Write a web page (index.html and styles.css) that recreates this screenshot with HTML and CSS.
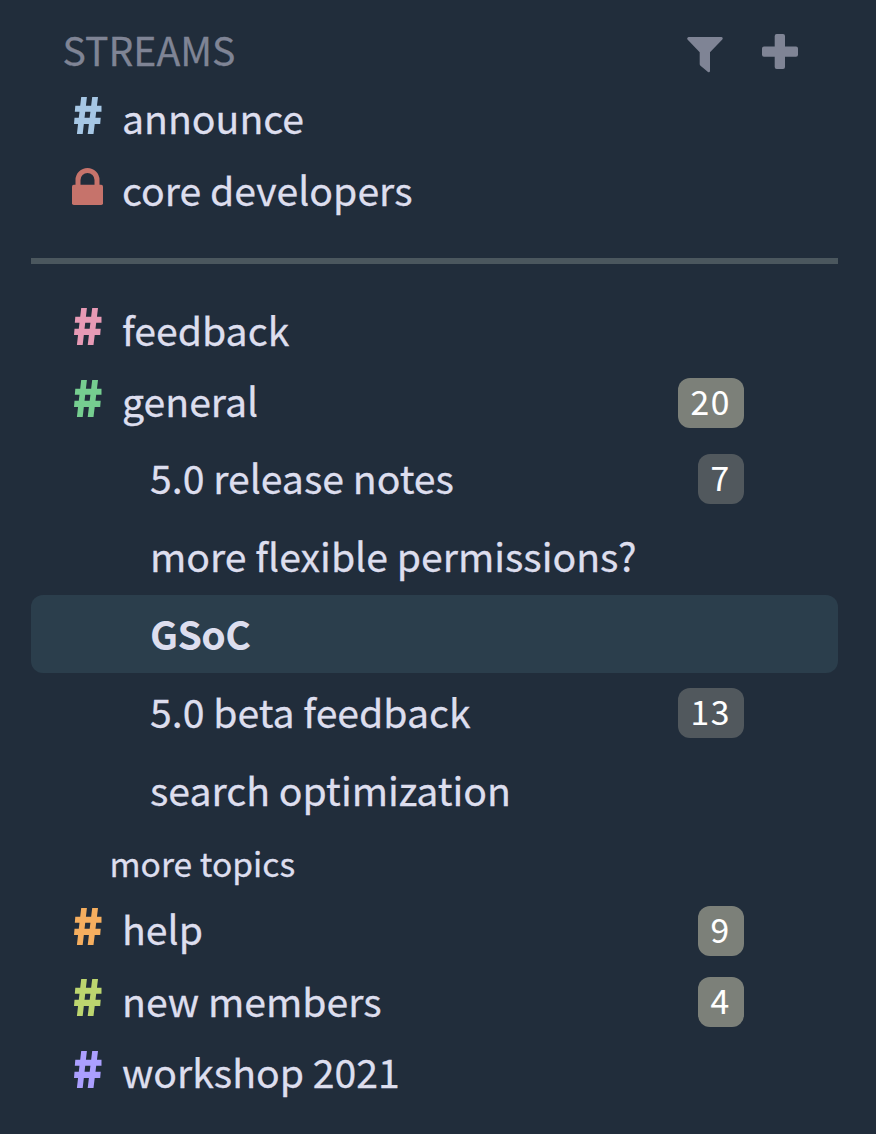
FILE: index.html
```html
<!DOCTYPE html>
<html lang="en">
<head>
<meta charset="utf-8">
<title>Streams</title>
<link rel="stylesheet" href="styles.css">
</head>
<body>
<svg width="0" height="0" class="defs"><defs>
<symbol id="hash" viewBox="0 0 28 37"><path d="M7.200 0H12.900L8.700 37H2.900ZM18.200 0H24L19.500 37H13.700ZM1.300 8.700H27.500V14.800H.8ZM.5 20.700H26.700L26.200 27H0Z" fill="currentColor"/></symbol>
</defs></svg>
<nav class="sidebar">
  <header class="heading">
    <h1 class="title">STREAMS</h1>
    <svg class="filter" viewBox="0 0 36 36"><path d="M1.500 0H34.500Q36.500 .8 35.300 2.500L23 15.300V34Q22.700 36 21 35L13.500 28.800Q12.700 28 12.700 27V15.300L.5 2.500Q-.5 .8 1.500 0Z" fill="currentColor"/></svg>
    <svg class="plus" viewBox="0 0 36 35"><path d="M14.700 0H21Q23 0 23 2V12.500H34Q36 12.500 36 14.500V20.700Q36 22.700 34 22.700H23V33Q23 35 21 35H14.700Q12.700 35 12.700 33V22.700H2Q0 22.700 0 20.700V14.500Q0 12.500 2 12.500H12.700V2Q12.700 0 14.700 0Z" fill="currentColor"/></svg>
  </header>
  <ul class="list">
    <li class="stream"><svg class="hash blue"><use href="#hash"/></svg><span class="name">announce</span></li>
    <li class="stream"><svg class="lock" viewBox="0 0 31 37"><path d="M6 18V12a9.500 9.500 0 0 1 19 0V18" fill="none" stroke="currentColor" stroke-width="5"/><rect y="16.700" width="31" height="20.300" rx="1.800" fill="currentColor"/></svg><span class="name">core developers</span></li>
  </ul>
  <hr class="divider">
  <ul class="list">
    <li class="stream"><svg class="hash pink"><use href="#hash"/></svg><span class="name">feedback</span></li>
    <li class="stream expanded"><svg class="hash green"><use href="#hash"/></svg><span class="name">general</span><span class="count">20</span></li>
    <li class="topic"><span class="name">5.0 release notes</span><span class="count muted">7</span></li>
    <li class="topic"><span class="name">more flexible permissions?</span></li>
    <li class="topic active"><span class="name">GSoC</span></li>
    <li class="topic"><span class="name">5.0 beta feedback</span><span class="count muted">13</span></li>
    <li class="topic"><span class="name">search optimization</span></li>
    <li class="more">more topics</li>
    <li class="stream"><svg class="hash orange"><use href="#hash"/></svg><span class="name">help</span><span class="count">9</span></li>
    <li class="stream"><svg class="hash lime"><use href="#hash"/></svg><span class="name">new members</span><span class="count">4</span></li>
    <li class="stream"><svg class="hash violet"><use href="#hash"/></svg><span class="name">workshop 2021</span></li>
  </ul>
</nav>
</body>
</html>
```
FILE: styles.css
```css
* { box-sizing: border-box; }
body { margin: 0; background: #212d3b; color: #dddeee; font: 39.200px/66px "Noto Sans CJK SC", sans-serif; -webkit-text-stroke: 0.3px; }
.defs { display: block; }
.sidebar { width: 876px; height: 1134px; padding: 16px 38px 0 31px; overflow: hidden; }
.heading { display: flex; align-items: center; height: 68px; padding: 0 40px 0 31.500px; color: #7f8495; }
.title { margin: 0 auto 2px 0; font-size: 39.200px; font-weight: 400; }
.filter { width: 36px; height: 36px; margin: 9px 39px 0 0; }
.plus { width: 36px; height: 35px; margin-top: 3px; }
.list { margin: 0; padding: 0; list-style: none; }
.stream { display: flex; align-items: center; height: 71.500px; padding: 0 94px 0 43px; }
.stream .name { margin-bottom: 5.300px; }
.expanded .name { margin-bottom: 6px; }
.hash { width: 28px; height: 37px; margin: 0 20px 9.500px 0; }
.pink { margin-bottom: 10.500px; }
.lock { width: 31px; height: 37px; margin: 0 19px 9px -2px; color: #c6736b; }
.divider { height: 6px; margin: 31px 0 32px; border: 0; background: #4b575e; }
.topic { display: flex; align-items: center; height: 78px; padding: 0 94px 0 119px; border-radius: 12px; }
.topic .name { margin-bottom: 2px; }
.active { background: #2b3e4c; font-weight: 700; letter-spacing: -0.600px; -webkit-text-stroke: 0; }
.more { height: 66px; padding-left: 78.500px; font-size: 33.600px; line-height: 68px; }
.count { min-width: 46px; height: 50px; margin-left: auto; padding: 0 13px 0 12.400px; border-radius: 12px; background: #7c8079; color: #fff; font-size: 33.600px; line-height: 46px; letter-spacing: 1.600px; text-align: center; -webkit-text-stroke: 0.1px; }
.muted { margin-top: 2px; background: #51585d; }
.blue { color: #a6c7e5; }
.pink { color: #e79ab5; }
.green { color: #76ce90; }
.orange { color: #f5ae5f; }
.lime { color: #bcd56f; }
.violet { color: #ab9fff; }
```
